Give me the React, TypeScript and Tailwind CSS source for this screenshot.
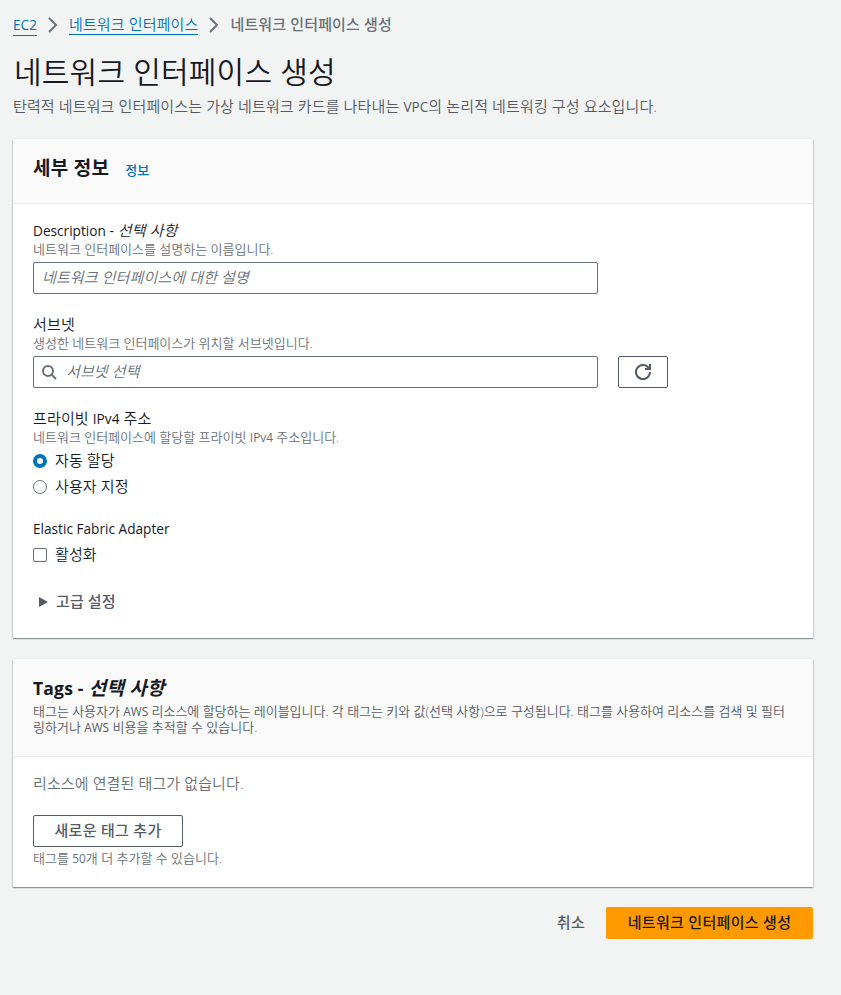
import type { ReactNode } from "react";

function Separator() {
  return (
    <svg className="mx-2 h-4 w-4 shrink-0 fill-none stroke-[#687078] stroke-2" viewBox="0 0 16 16">
      <path d="M4 1l7 7-7 7" />
    </svg>
  );
}

function SearchIcon() {
  return (
    <svg className="h-4 w-4 shrink-0 fill-none stroke-[#687078] stroke-2" viewBox="0 0 16 16">
      <circle cx="7" cy="7" r="5" />
      <path d="m10.5 10.5 4.5 4.5" />
    </svg>
  );
}

function RefreshIcon() {
  return (
    <svg className="h-4 w-4 fill-none stroke-[#545b64] stroke-2" viewBox="0 0 16 16">
      <path d="M15 8a7 7 0 1 1-1.5-4.3L15 5" />
      <path d="M10 5h5V0" />
    </svg>
  );
}

function Latin({ children }: { children: ReactNode }) {
  return <span className="text-[0.91em] font-normal tracking-normal">{children}</span>;
}

function Card({ header, children }: { header: ReactNode; children: ReactNode }) {
  return (
    <section className="w-[800px] bg-white shadow-[0_1px_1px_0_rgba(0,28,36,0.25),1px_1px_1px_0_rgba(0,28,36,0.12),-1px_1px_1px_0_rgba(0,28,36,0.12)]">
      <div className="border-b border-[#eaeded] bg-[#fafafa] px-5 shadow-[0_-1px_0_0_#eaeded]">{header}</div>
      <div className="px-5">{children}</div>
    </section>
  );
}

function Label({ children }: { children: ReactNode }) {
  return <div className="h-[21px] text-[15px] leading-5 tracking-[0.14px] whitespace-nowrap">{children}</div>;
}

function Hint({ children }: { children: ReactNode }) {
  return <div className="h-4 text-[13px] leading-4 whitespace-nowrap text-[#687078]">{children}</div>;
}

export default function App() {
  return (
    <div className="h-[995px] overflow-hidden bg-[#f2f3f3] pl-[13px] font-['Open_Sans','Noto_Sans_CJK_KR',sans-serif] font-[350] text-[#16191f]">
      <nav className="flex h-[49px] items-center text-[15px] leading-5 tracking-[0.14px] whitespace-nowrap">
        <a href="#" className="border-b border-[#0073bb] text-[#0073bb]">
          <Latin>EC2</Latin>
        </a>
        <Separator />
        <a href="#" className="border-b border-[#0073bb] text-[#0073bb]">네트워크 인터페이스</a>
        <Separator />
        <span className="pb-px font-medium text-[#687078]">네트워크 인터페이스 생성</span>
      </nav>

      <h1 className="h-[46px] pl-px text-[30px] leading-[46px] tracking-[0.2px] whitespace-nowrap">네트워크 인터페이스 생성</h1>
      <p className="h-11 pt-px text-[15px] leading-5 tracking-[0.13px] whitespace-nowrap text-[#545b64]">
        탄력적 네트워크 인터페이스는 가상 네트워크 카드를 나타내는 <Latin>VPC</Latin>의 논리적 네트워킹 구성 요소입니다.
      </p>

      <Card
        header={
          <div className="flex h-16 items-baseline pt-[17px] whitespace-nowrap">
            <h2 className="text-[19px] leading-6 font-bold tracking-[0.3px]">세부 정보</h2>
            <a href="#" className="ml-4 text-[13px] font-medium text-[#0073bb]">정보</a>
          </div>
        }
      >
        <div className="h-[434px] pt-4">
          <Label>
            <Latin>Description -</Latin> <i>선택 사항</i>
          </Label>
          <Hint>네트워크 인터페이스를 설명하는 이름입니다.</Hint>
          <div className="mt-[5px] flex h-8 w-[565px] items-center rounded-xs border border-[#687078] px-2 pb-0.5 text-[15px] tracking-[0.12px] text-[#687078] italic">
            네트워크 인터페이스에 대한 설명
          </div>

          <div className="mt-5">
            <Label>서브넷</Label>
            <Hint>생성한 네트워크 인터페이스가 위치할 서브넷입니다.</Hint>
            <div className="mt-[5px] flex gap-5">
              <div className="flex h-8 w-[565px] items-center gap-[9px] rounded-xs border border-[#687078] px-[7px] text-[15px] tracking-[0.12px] text-[#687078] italic">
                <SearchIcon />
                <span className="pb-0.5">서브넷 선택</span>
              </div>
              <button className="flex h-8 w-[50px] items-center justify-center rounded-xs border border-[#545b64]">
                <RefreshIcon />
              </button>
            </div>
          </div>

          <div className="mt-5">
            <Label>
              프라이빗 <Latin>IPv4</Latin> 주소
            </Label>
            <Hint>
              네트워크 인터페이스에 할당할 프라이빗 <Latin>IPv4</Latin> 주소입니다.
            </Hint>
            <div className="mt-1.5 flex h-5 items-center gap-2 text-[15px] tracking-[0.12px]">
              <span className="h-3.5 w-3.5 rounded-full border-4 border-[#0073bb]" />
              <span className="pb-0.5">자동 할당</span>
            </div>
            <div className="mt-1.5 flex h-5 items-center gap-2 text-[15px] tracking-[0.12px]">
              <span className="h-3.5 w-3.5 rounded-full border border-[#687078]" />
              <span className="pb-0.5">사용자 지정</span>
            </div>
          </div>

          <div className="mt-[21px]">
            <Label>
              <Latin>Elastic Fabric Adapter</Latin>
            </Label>
            <div className="mt-1.5 flex h-5 items-center gap-2 text-[15px] tracking-[0.12px]">
              <span className="h-3.5 w-3.5 rounded-xs border border-[#687078]" />
              <span className="pb-0.5">활성화</span>
            </div>
          </div>

          <div className="mt-[27px] flex h-5 items-center text-[15px] font-medium tracking-[0.12px] text-[#545b64]">
            <svg className="mr-2 ml-1.5 h-2.5 w-[9px] fill-[#545b64]" viewBox="0 0 9 10">
              <path d="M0 0 9 5 0 10z" />
            </svg>
            <span className="pb-0.5">고급 설정</span>
          </div>
        </div>
      </Card>

      <div className="h-[21px]" />

      <Card
        header={
          <div className="h-[97px] pt-[17px]">
            <h2 className="h-[27px] text-[19px] leading-6 font-bold tracking-[0.2px] whitespace-nowrap">
              <span className="text-[0.92em]">Tags -</span> <i>선택 사항</i>
            </h2>
            <div className="text-[13px] leading-4 whitespace-nowrap text-[#545b64]">
              <p className="h-4 tracking-[-0.02px]">
                태그는 사용자가 <Latin>AWS</Latin> 리소스에 할당하는 레이블입니다. 각 태그는 키와 값(선택 사항)으로 구성됩니다. 태그를 사용하여 리소스를 검색 및 필터
              </p>
              <p className="h-4">
                링하거나 <Latin>AWS</Latin> 비용을 추적할 수 있습니다.
              </p>
            </div>
          </div>
        }
      >
        <div className="h-[130px] pt-4">
          <p className="text-[15px] leading-5 tracking-[0.12px] text-[#687078]">리소스에 연결된 태그가 없습니다.</p>
          <button className="mt-[22px] block h-8 w-[150px] rounded-xs border border-[#545b64] pb-0.5 text-[15px] font-medium tracking-[0.3px] whitespace-nowrap text-[#545b64]">
            새로운 태그 추가
          </button>
          <div className="mt-[3px]">
            <Hint>
              태그를 <Latin>50</Latin>개 더 추가할 수 있습니다.
            </Hint>
          </div>
        </div>
      </Card>

      <div className="mt-5 flex h-8 w-[800px] items-center justify-end gap-[21px] text-[15px] tracking-[0.3px] whitespace-nowrap">
        <button className="pb-0.5 font-medium text-[#545b64]">취소</button>
        <button className="h-8 w-[207px] rounded-xs bg-[#ff9900] pb-0.5 font-medium">네트워크 인터페이스 생성</button>
      </div>
    </div>
  );
}
